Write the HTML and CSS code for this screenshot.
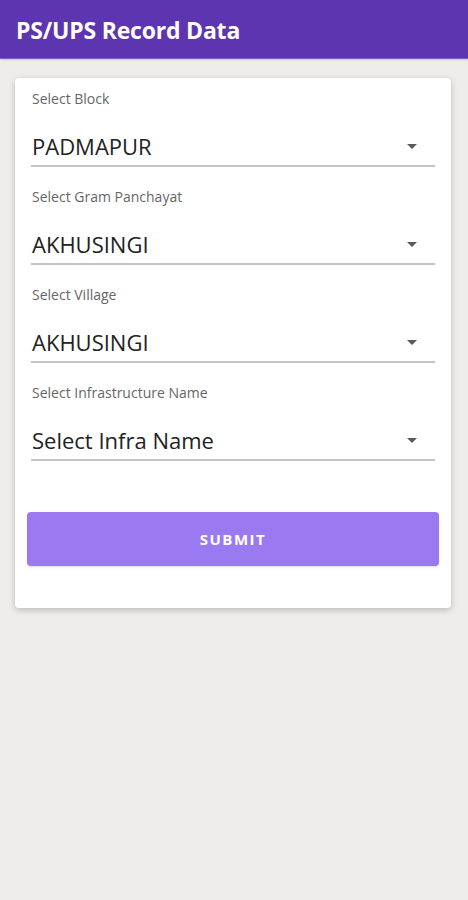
FILE: index.html
```html
<!DOCTYPE html>
<html>
<head>
<meta charset="utf-8">
<link rel="stylesheet" href="styles.css">
</head>
<body>
<header class="appbar"><h1 class="title">PS/UPS Record Data</h1></header>
<main class="card">
  <div class="field">
    <div class="label">Select Block</div>
    <div class="select"><span class="value">PADMAPUR</span><span class="arrow"></span></div>
  </div>
  <div class="field">
    <div class="label">Select Gram Panchayat</div>
    <div class="select"><span class="value">AKHUSINGI</span><span class="arrow"></span></div>
  </div>
  <div class="field">
    <div class="label">Select Village</div>
    <div class="select"><span class="value">AKHUSINGI</span><span class="arrow"></span></div>
  </div>
  <div class="field">
    <div class="label">Select Infrastructure Name</div>
    <div class="select"><span class="value">Select Infra Name</span><span class="arrow"></span></div>
  </div>
  <button class="submit">SUBMIT</button>
</main>
</body>
</html>
```
FILE: styles.css
```css
html, body {
  margin: 0;
  padding: 0;
}
body {
  background: #eeedeb;
  font-family: "Open Sans", "Liberation Sans", sans-serif;
  width: 468px;
  height: 900px;
}
.appbar {
  height: 58px;
  background: #5e35b1;
  border-bottom: 1px solid #7a5cc4;
  display: flex;
  align-items: center;
  padding-left: 16px;
  box-shadow: 0 1px 2px rgba(0,0,0,0.15);
}
.title {
  margin: 0;
  color: #ffffff;
  font-size: 23px;
  font-weight: 700;
  letter-spacing: -0.2px;
  padding-top: 1px;
}
.card {
  margin: 19px 17px 0 15px;
  background: #ffffff;
  border-radius: 4px;
  box-shadow: 0 2px 6px rgba(0,0,0,0.22);
  padding: 13px 16px 42px 16px;
  display: flex;
  flex-direction: column;
}
.field {
  margin-bottom: 22px;
}
.label {
  font-size: 14px;
  line-height: 16px;
  color: #666666;
  padding-left: 1px;
}
.select {
  margin-top: 25px;
  display: flex;
  align-items: center;
  justify-content: space-between;
  border-bottom: 2px solid #c4c4c4;
  padding-bottom: 5px;
}
.value {
  font-size: 22px;
  line-height: 28px;
  color: #222222;
  padding-left: 1px;
}
.arrow {
  width: 0;
  height: 0;
  border-left: 5px solid transparent;
  border-right: 5px solid transparent;
  border-top: 5px solid #5a5a5a;
  margin-right: 18px;
}
.submit {
  margin: 29px -4px 0 -4px;
  height: 54px;
  border: none;
  border-radius: 4px;
  background: #9b79f1;
  color: #ffffff;
  font-family: "Open Sans", "Liberation Sans", sans-serif;
  font-size: 15px;
  font-weight: 700;
  letter-spacing: 1.5px;
  box-shadow: 0 1px 2px rgba(0,0,0,0.15);
}
```
